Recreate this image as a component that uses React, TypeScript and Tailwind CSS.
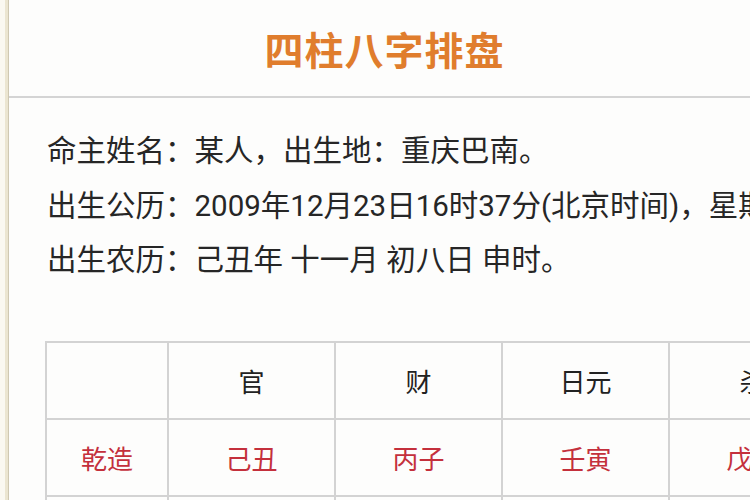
const infoLines = [
  "命主姓名：某人，出生地：重庆巴南。",
  "出生公历：2009年12月23日16时37分(北京时间)，星期三",
  "出生农历：己丑年 十一月 初八日 申时。",
];

const headers = ["", "官", "财", "日元", "杀"];
const pillars = ["乾造", "己丑", "丙子", "壬寅", "戊申"];

export default function App() {
  return (
    <div
      className="flex h-[500px] w-[750px] overflow-hidden bg-[#fdfdfc]"
      style={{ fontFamily: '"Noto Sans CJK SC", "Noto Sans", sans-serif' }}
    >
      <div className="w-[5px] shrink-0 bg-[#faf8f1]" />
      <div className="w-[4px] shrink-0 border-r border-[#cfc8b2] bg-[#ebe5d1]" />
      <div className="min-w-0 flex-1 overflow-hidden">
        <div className="flex h-[98px] items-center justify-center border-b-2 border-[#d4d4d4]">
          <h1 className="pl-[10px] text-[39px] font-bold leading-none tracking-[1px] text-[#e07d2d]">
            四柱八字排盘
          </h1>
        </div>

        <div className="pl-[38px] pt-[26px]">
          {infoLines.map((line) => (
            <p
              key={line}
              className="whitespace-nowrap text-[29.5px] leading-[54.5px] text-[#262626]"
              style={{ fontFamily: 'Roboto, "Noto Sans CJK SC", sans-serif' }}
            >
              {line}
            </p>
          ))}
        </div>

        <table className="ml-[36px] mt-[53px] w-[792px] max-w-none table-fixed border-collapse">
          <colgroup>
            <col className="w-[122px]" />
            <col className="w-[167px]" />
            <col className="w-[167px]" />
            <col className="w-[167px]" />
            <col className="w-[167px]" />
          </colgroup>
          <tbody>
            <tr>
              {headers.map((h, i) => (
                <td
                  key={i}
                  className="h-[77px] border-2 border-[#d3d3d3] text-center text-[26px] text-[#222]"
                >
                  {h}
                </td>
              ))}
            </tr>
            <tr>
              {pillars.map((p) => (
                <td
                  key={p}
                  className="h-[77px] border-2 border-[#d3d3d3] text-center text-[26px] text-[#c4303c]"
                >
                  {p}
                </td>
              ))}
            </tr>
            <tr>
              {pillars.map((p) => (
                <td key={p} className="h-[77px] border-2 border-[#d3d3d3]" />
              ))}
            </tr>
          </tbody>
        </table>
      </div>
    </div>
  );
}
